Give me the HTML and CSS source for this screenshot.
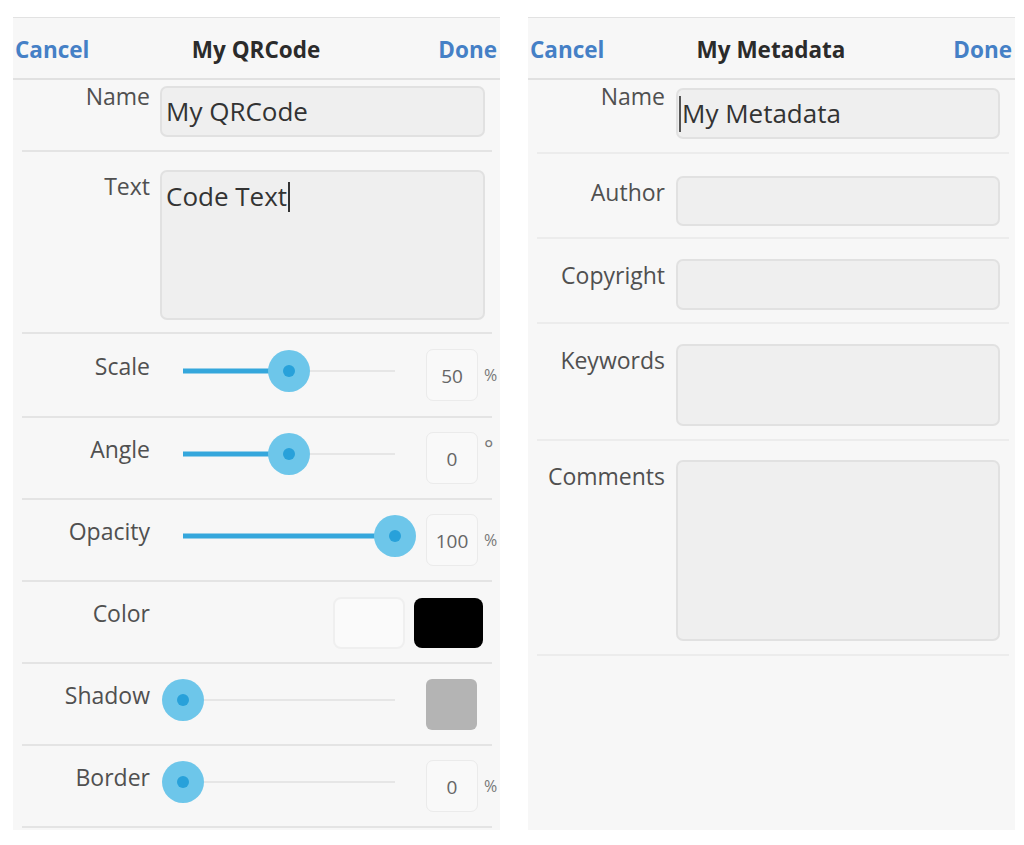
FILE: index.html
```html
<!DOCTYPE html>
<html>

<head>
  <meta charset="UTF-8">
  <title>QRCode / Metadata</title>
  <link rel="stylesheet" href="styles.css">
</head>

<body>
  <main class="screens">
    <!-- QR code editor -->
    <section class="panel">
      <div class="bar">
        <span class="bar-btn">Cancel</span>
        <span class="bar-title">My QRCode</span>
        <span class="bar-btn done">Done</span>
      </div>

      <div class="row row-name">
        <label class="label">Name</label>
        <div class="field">My QRCode</div>
      </div>

      <div class="row row-text">
        <label class="label">Text</label>
        <div class="field area">Code Text<span class="caret"></span></div>
      </div>

      <div class="row slide-row first">
        <label class="label">Scale</label>
        <div class="slider">
          <div class="fill" style="width: 50%"></div>
          <span class="thumb" style="left: 50%"></span>
        </div>
        <div class="value">50</div>
        <span class="unit">%</span>
      </div>

      <div class="row slide-row">
        <label class="label">Angle</label>
        <div class="slider">
          <div class="fill" style="width: 50%"></div>
          <span class="thumb" style="left: 50%"></span>
        </div>
        <div class="value">0</div>
        <span class="unit deg">&deg;</span>
      </div>

      <div class="row slide-row">
        <label class="label">Opacity</label>
        <div class="slider">
          <div class="fill" style="width: 100%"></div>
          <span class="thumb" style="left: 100%"></span>
        </div>
        <div class="value">100</div>
        <span class="unit">%</span>
      </div>

      <div class="row slide-row">
        <label class="label">Color</label>
        <div class="swatches">
          <span class="swatch white"></span>
          <span class="swatch black"></span>
        </div>
      </div>

      <div class="row slide-row">
        <label class="label">Shadow</label>
        <div class="slider">
          <div class="fill" style="width: 0%"></div>
          <span class="thumb" style="left: 0%"></span>
        </div>
        <span class="swatch gray"></span>
      </div>

      <div class="row slide-row">
        <label class="label">Border</label>
        <div class="slider">
          <div class="fill" style="width: 0%"></div>
          <span class="thumb" style="left: 0%"></span>
        </div>
        <div class="value">0</div>
        <span class="unit">%</span>
      </div>
    </section>

    <!-- metadata editor -->
    <section class="panel meta">
      <div class="bar">
        <span class="bar-btn">Cancel</span>
        <span class="bar-title">My Metadata</span>
        <span class="bar-btn done">Done</span>
      </div>

      <div class="row m-name">
        <label class="label">Name</label>
        <div class="field"><span class="caret first"></span>My Metadata</div>
      </div>

      <div class="row m-author">
        <label class="label">Author</label>
        <div class="field"></div>
      </div>

      <div class="row m-copy">
        <label class="label">Copyright</label>
        <div class="field"></div>
      </div>

      <div class="row m-keys">
        <label class="label">Keywords</label>
        <div class="field keys"></div>
      </div>

      <div class="row m-comments">
        <label class="label">Comments</label>
        <div class="field comments"></div>
      </div>
    </section>
  </main>
</body>

</html>
```

FILE: styles.css
```css
body {
  margin: 0;
  background-color: #ffffff;
  font-family: "Open Sans", "DejaVu Sans", sans-serif;
  color: #555;
}

.screens {
  display: flex;
  gap: 28px;
  padding: 17px 0 0 13px;
}

.panel {
  width: 487px;
  height: 813px;
  box-sizing: border-box;
  background-color: #f7f7f7;
  border-top: 1px solid #e2e2e2;
}

/* top bar */
.bar {
  display: grid;
  grid-template-columns: 1fr auto 1fr;
  align-items: center;
  height: 62px;
  box-sizing: border-box;
  padding: 3px 3px 0 2px;
  border-bottom: 2px solid #e1e1e1;
  font-size: 22.5px;
  font-weight: 700;
}

.bar-btn {
  color: #4580c6;
}

.bar-btn.done {
  justify-self: end;
}

.bar-title {
  color: #2b2b2b;
}

/* rows */
.row {
  display: flex;
  align-items: flex-start;
  margin: 0 8px 0 9px;
  padding-right: 7px;
  border-bottom: 2px solid #e4e4e4;
}

.label {
  flex: none;
  width: 128px;
  text-align: right;
  font-size: 23px;
  line-height: 26px;
  color: #505050;
}

.field {
  flex: 1;
  margin-left: 10px;
  height: 51px;
  box-sizing: border-box;
  padding: 0 4px;
  background-color: #efefef;
  border: 2px solid #e1e1e1;
  border-radius: 7px;
  font-size: 26px;
  line-height: 46px;
  color: #333;
}

.field.area {
  height: 150px;
  line-height: 30px;
  padding-top: 9px;
}

.caret {
  display: inline-block;
  width: 0;
  height: 30px;
  margin-left: 1px;
  border-left: 2px solid #333;
  vertical-align: -6px;
}

.caret.first {
  margin: 0 1px 0 -3px;
  height: 36px;
  border-left-color: #555;
  vertical-align: -9px;
}

.row-name {
  padding-top: 6px;
  padding-bottom: 13px;
}

.row-name .label {
  margin-top: -3px;
}

.row-text {
  padding-top: 18px;
  padding-bottom: 12px;
}

.row-text .label {
  margin-top: 3px;
}

/* slider rows */
.slide-row {
  align-items: center;
  height: 80px;
}

.slide-row.first {
  height: 82px;
}

.slide-row .label {
  margin-bottom: 18px;
}

.slider {
  position: relative;
  flex: none;
  width: 212px;
  height: 2px;
  margin-left: 33px;
  margin-bottom: 8px;
  background-color: #e6e6e6;
}

.fill {
  position: absolute;
  left: 0;
  top: 50%;
  height: 5px;
  transform: translateY(-50%);
  background-color: #35a7dc;
}

.thumb {
  position: absolute;
  top: 50%;
  width: 42px;
  height: 42px;
  border-radius: 50%;
  transform: translate(-50%, -50%);
  background-color: #6dc6ea;
}

.thumb::after {
  content: "";
  position: absolute;
  left: 15px;
  top: 15px;
  width: 12px;
  height: 12px;
  border-radius: 50%;
  background-color: #28a1da;
}

.value {
  flex: none;
  width: 52px;
  height: 52px;
  box-sizing: border-box;
  margin-left: 31px;
  border: 1px solid #ebebeb;
  border-radius: 7px;
  background-color: #f9f9f9;
  text-align: center;
  font-size: 19px;
  line-height: 52px;
  color: #666;
}

.unit {
  flex: none;
  width: 14px;
  margin-left: 6px;
  font-size: 16px;
  color: #777;
}

.unit.deg {
  font-size: 22px;
  align-self: flex-start;
  margin-top: 14px;
}

.swatches {
  display: flex;
  align-items: center;
  gap: 9px;
  margin-left: auto;
  margin-right: 2px;
  margin-top: 2px;
}

.swatch {
  flex: none;
  display: block;
  border-radius: 8px;
}

.swatch.white {
  width: 72px;
  height: 52px;
  box-sizing: border-box;
  border: 2px solid #efefef;
  background-color: #fafafa;
}

.swatch.black {
  width: 69px;
  height: 50px;
  background-color: #000000;
}

.swatch.gray {
  width: 51px;
  height: 51px;
  margin-left: 31px;
  border-radius: 6px;
  background-color: #b4b4b4;
}

/* metadata panel */
.meta .row {
  margin: 0 6px 0 9px;
  padding-right: 9px;
  border-bottom-color: #ececec;
}

.meta .field {
  margin-left: 11px;
}

.meta .label {
  margin-top: 3px;
}

.m-name {
  padding-top: 8px;
  padding-bottom: 13px;
}

.meta .m-name .label {
  margin-top: -5px;
}

.m-author {
  padding-top: 22px;
  padding-bottom: 11px;
}

.m-author .field {
  height: 50px;
}

.m-copy {
  padding-top: 20px;
  padding-bottom: 12px;
}

.m-keys {
  padding-top: 20px;
  padding-bottom: 13px;
}

.field.keys {
  height: 82px;
}

.m-comments {
  padding-top: 19px;
  padding-bottom: 13px;
}

.field.comments {
  height: 181px;
}
```
